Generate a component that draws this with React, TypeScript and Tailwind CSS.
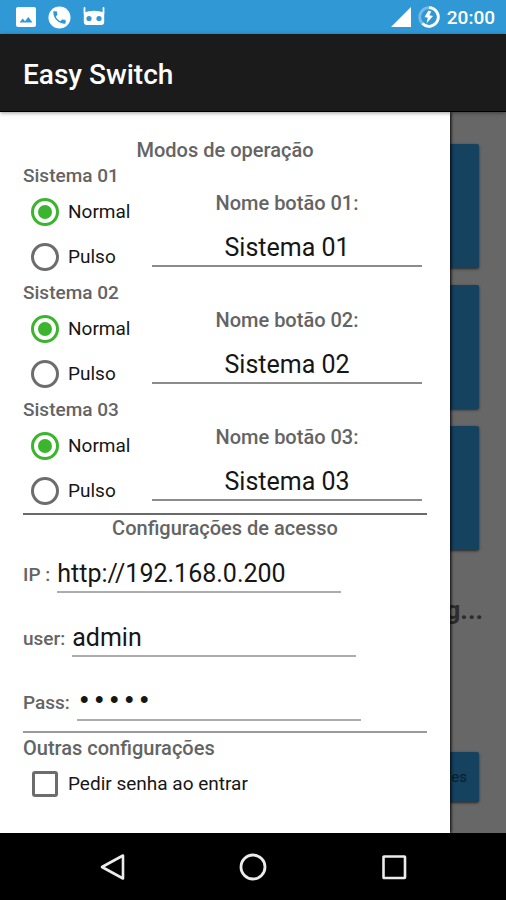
import { useState } from 'react'

type Mode = 'normal' | 'pulso'

const systems = ['01', '02', '03']

const headingClass = 'text-[20px] leading-[26px] font-medium text-[#646464]'
const labelClass = 'text-[19px] leading-[26px] font-medium text-[#646464]'
const fieldClass =
  'h-10 min-w-0 bg-transparent border-b-2 text-[25px] leading-[38px] text-[#161616] outline-none'
const optionClass = 'flex h-[45px] items-center gap-[9px] pl-2 text-[19px] text-[#161616]'

function StatusBar() {
  return (
    <div className="flex h-[34px] items-center justify-between bg-[#3098d4] pl-4 pr-[11px] text-white">
      <div className="flex items-center gap-3">
        <svg width="20" height="20" viewBox="0 0 20 20" fill="currentColor">
          <path
            fillRule="evenodd"
            d="M2 0h16a2 2 0 0 1 2 2v16a2 2 0 0 1-2 2H2a2 2 0 0 1-2-2V2a2 2 0 0 1 2-2zM3.500 15.500h13l-4.200-5.500-3.300 4.200-2.200-2.700z"
          />
        </svg>
        <svg width="23" height="23" viewBox="0 0 24 24">
          <circle cx="12" cy="12" r="11.500" fill="#fff" />
          <path
            transform="translate(3.300 3.300) scale(.72)"
            fill="#3098d4"
            d="M6.620 10.790c1.440 2.830 3.760 5.140 6.590 6.590l2.200-2.200c.27-.27.67-.36 1.020-.24 1.120.37 2.330.57 3.570.57.55 0 1 .45 1 1V20c0 .55-.45 1-1 1C10.610 21 3 13.390 3 4c0-.55.45-1 1-1h3.500c.55 0 1 .45 1 1 0 1.250.2 2.450.57 3.570.11.35.03.74-.25 1.020z"
          />
        </svg>
        <svg width="22" height="20" viewBox="0 0 22 20">
          <path
            d="M1.500 1v5M20.500 1v5"
            stroke="#fff"
            strokeWidth="1.800"
            strokeLinecap="round"
          />
          <path fill="#fff" d="M.8 5.500q10.200-3.500 20.400 0V15q0 3-3 3H3.800q-3 0-3-3z" />
          <circle cx="6" cy="11.500" r="2.600" fill="#3098d4" />
          <circle cx="16" cy="11.500" r="2.600" fill="#3098d4" />
        </svg>
      </div>
      <div className="flex items-center gap-[7px]">
        <svg width="20" height="20" viewBox="0 0 21 21" fill="currentColor">
          <path d="M21 0v21H0z" />
        </svg>
        <svg width="22" height="22" viewBox="0 0 22 22" fill="none">
          <circle cx="11" cy="11" r="9.300" stroke="#fff" strokeOpacity=".35" strokeWidth="2.800" />
          <path d="M11 1.700a9.300 9.300 0 1 1-6.600 15.900" stroke="#fff" strokeWidth="2.800" />
          <path d="M10.500 4.500 6.500 11l3.300.8-1.300 5.700 6.500-7.500-3.700-.8 2-3.700z" fill="#fff" />
        </svg>
        <span className="pt-0.5 text-[19px] leading-6 font-medium">20:00</span>
      </div>
    </div>
  )
}

function SystemSettings({ id }: { id: string }) {
  const [mode, setMode] = useState<Mode>('normal')
  const [name, setName] = useState(`Sistema ${id}`)

  return (
    <div className="flex">
      <fieldset className="w-[129px] shrink-0">
        <legend className={labelClass}>Sistema {id}</legend>
        {(['normal', 'pulso'] as const).map(m => (
          <label key={m} className={optionClass}>
            <input
              type="radio"
              name={`mode-${id}`}
              checked={mode === m}
              onChange={() => setMode(m)}
              className="size-7 shrink-0 appearance-none rounded-full border-[3px] border-[#6d6d6d] p-1 checked:border-[#3bb52d] checked:bg-[#3bb52d] checked:bg-clip-content"
            />
            <span className="pt-0.5">{m === 'normal' ? 'Normal' : 'Pulso'}</span>
          </label>
        ))}
      </fieldset>
      <div className="mr-[5px] flex min-w-0 flex-1 flex-col justify-end gap-[11px] pb-3">
        <label htmlFor={`name-${id}`} className={`${headingClass} text-center`}>
          Nome botão {id}:
        </label>
        <input
          id={`name-${id}`}
          value={name}
          onChange={e => setName(e.target.value)}
          className={`${fieldClass} border-[#8c8c8c] pt-0.5 text-center`}
        />
      </div>
    </div>
  )
}

function AccessField({ id, label, type, initial }: { id: string; label: string; type: string; initial: string }) {
  const [value, setValue] = useState(initial)

  return (
    <div className="flex items-center gap-[7px]">
      <label htmlFor={id} className={`${labelClass} pt-1`}>
        {label}
      </label>
      <input
        id={id}
        type={type}
        value={value}
        onChange={e => setValue(e.target.value)}
        className={`${fieldClass} w-[284px] border-[#adadad] pt-0.5 ${
          type === 'password' ? "font-['Liberation_Mono',monospace]" : ''
        }`}
      />
    </div>
  )
}

function Drawer() {
  const [askPassword, setAskPassword] = useState(false)

  return (
    <aside className="z-10 col-start-1 row-start-1 mr-14 bg-white px-[23px] pt-[25px] pb-6 shadow-[1px_0_3px_#000]">
      <h2 className={`${headingClass} text-center`}>Modos de operação</h2>
      <div className="flex flex-col gap-px">
        {systems.map(id => (
          <SystemSettings key={id} id={id} />
        ))}
      </div>

      <hr className="border-t-2 border-[#6a6a6a]" />
      <h2 className={`${headingClass} text-center`}>Configurações de acesso</h2>
      <div className="mt-3 flex flex-col gap-6">
        <AccessField id="ip" label="IP :" type="text" initial="http://192.168.0.200" />
        <AccessField id="user" label="user:" type="text" initial="admin" />
        <AccessField id="pass" label="Pass:" type="password" initial="admin" />
      </div>

      <hr className="mt-[10px] mb-0.5 border-t-2 border-[#9a9a9a]" />
      <h2 className={headingClass}>Outras configurações</h2>
      <label className={optionClass}>
        <input
          type="checkbox"
          checked={askPassword}
          onChange={e => setAskPassword(e.target.checked)}
          className="mx-px size-[26px] shrink-0 appearance-none rounded-[3px] border-[3px] border-[#6d6d6d] checked:bg-[#3bb52d]"
        />
        <span className="pt-0.5">Pedir senha ao entrar</span>
      </label>
    </aside>
  )
}

function HomeScreen() {
  return (
    <div className="col-start-1 row-start-1 flex flex-col items-end bg-[#676767] px-[27px] pt-8 pb-[31px]">
      <div className="flex w-full flex-col gap-[17px]">
        {systems.map(id => (
          <button
            key={id}
            aria-label={`Sistema ${id}`}
            className="h-[124px] w-full rounded-xs bg-[#14425f] shadow-sm shadow-black/50"
          />
        ))}
      </div>
      <p className="-mr-1 mt-11 text-[26px] leading-8 font-bold text-[#2d2d2d]">g...</p>
      <button className="mt-auto h-[50px] w-40 rounded-xs bg-[#14425f] pr-3 text-right text-[15px] text-[#0a1d2a] shadow-sm shadow-black/50">
        es
      </button>
    </div>
  )
}

function NavigationBar() {
  return (
    <nav className="flex h-[67px] items-center justify-center gap-[113px] bg-black text-[#ececec]">
      <button aria-label="Voltar">
        <svg width="28" height="28" viewBox="0 0 28 28" fill="none" stroke="currentColor" strokeWidth="2.600" strokeLinejoin="round">
          <path d="M25 2.500v23L4 14z" />
        </svg>
      </button>
      <button aria-label="Início">
        <svg width="28" height="28" viewBox="0 0 28 28" fill="none" stroke="currentColor" strokeWidth="2.800">
          <circle cx="14" cy="14" r="12" />
        </svg>
      </button>
      <button aria-label="Recentes">
        <svg width="28" height="28" viewBox="0 0 28 28" fill="none" stroke="currentColor" strokeWidth="2.600" strokeLinejoin="round">
          <rect x="3.500" y="3.500" width="21.500" height="21.500" rx=".5" />
        </svg>
      </button>
    </nav>
  )
}

export default function App() {
  return (
    <div className="flex min-h-screen flex-col bg-black font-[Roboto,sans-serif]">
      <StatusBar />
      <header className="z-20 flex h-[78px] items-center border-b border-black bg-[#1b1b1b] px-[23px] pt-1 shadow-[0_1px_4px_#0006]">
        <h1 className="text-[28px] leading-8 font-medium text-white">Easy Switch</h1>
      </header>
      <main className="grid flex-1 grid-cols-1">
        <HomeScreen />
        <Drawer />
      </main>
      <NavigationBar />
    </div>
  )
}
